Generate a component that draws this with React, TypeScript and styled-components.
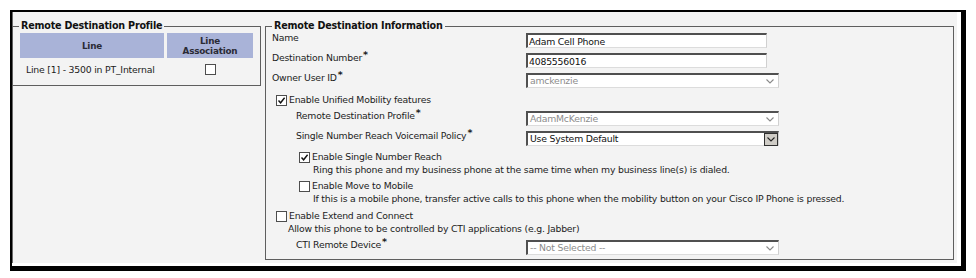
import React from "react";
import styled, { createGlobalStyle } from "styled-components";

const GlobalStyle = createGlobalStyle`
  html, body { margin: 0; padding: 0; background: #ffffff; }
  body {
    font-family: Tahoma, "DejaVu Sans", sans-serif;
    font-size: 9.3px;
    letter-spacing: -0.2px;
    color: #1c1c1c;
  }
  * { box-sizing: border-box; }
`;

const Frame = styled.div`
  margin: 10px 0 0 10px;
  width: 956px;
  border-style: solid;
  border-color: #000;
  border-width: 2px 5px 5px 2px;
`;

const Panel = styled.div`
  background: #f3f3f3;
  border-right: 4px solid #fff;
  border-bottom: 3px solid #fff;
  box-shadow: inset 1px 0 0 #6a6a6a;
  padding: 8px 3px 3px 0;
  display: flex;
  align-items: flex-start;
  gap: 4px;
`;

const GroupBox = styled.fieldset<{ $w: number; $h: number }>`
  margin: 0;
  padding: 0 6px;
  width: ${(p) => p.$w}px;
  height: ${(p) => p.$h}px;
  min-inline-size: 0;
  border: 1px solid #5e5e5e;
`;

const Legend = styled.legend`
  padding: 0 2px;
  margin-left: 0;
  font-weight: bold;
  font-size: 9.6px;
  line-height: 12px;
  color: #111;
`;

const LineGrid = styled.div`
  margin: 1px 0 0 1px;
  display: grid;
  grid-template-columns: 144px 86px;
  column-gap: 3px;
`;

const HeaderCell = styled.div`
  background: #a9b3d8;
  height: 25px;
  display: flex;
  align-items: center;
  justify-content: center;
  text-align: center;
  font-weight: bold;
  font-size: 8.8px;
  line-height: 10px;
  color: #2b2b35;
`;

const DataCell = styled.div<{ $center?: boolean }>`
  height: 22px;
  display: flex;
  align-items: center;
  justify-content: ${(p) => (p.$center ? "center" : "flex-start")};
  padding-left: ${(p) => (p.$center ? 0 : 6)}px;
  padding-top: 1px;
`;

const Box = styled.span`
  width: 11px;
  height: 11px;
  flex: none;
  display: inline-flex;
  align-items: center;
  justify-content: center;
  background: #fff;
  border: 1px solid #4d4d4d;
`;

const Checkbox = ({ checked }: { checked?: boolean }) => (
  <Box>
    {checked && (
      <svg width="9" height="9" viewBox="0 0 9 9">
        <polyline points="1.5,4.5 3.6,6.8 7.6,1.8" fill="none" stroke="#111" strokeWidth="1.4" />
      </svg>
    )}
  </Box>
);

const Content = styled.div`
  display: flex;
  flex-direction: column;
`;

const FormRow = styled.div<{ $mt?: number }>`
  display: grid;
  grid-template-columns: 254px auto;
  height: 20px;
  margin-top: ${(p) => p.$mt ?? 0}px;
  align-items: start;
`;

const Label = styled.div<{ $indent?: number }>`
  padding-left: ${(p) => p.$indent ?? 0}px;
  line-height: 12px;
  white-space: nowrap;
`;

const Star = styled.span`
  font-weight: bold;
  font-size: 9.5px;
  position: relative;
  top: -3px;
  margin-left: 1px;
`;

const TextBox = styled.input`
  margin-top: 1px;
  width: 241px;
  height: 15px;
  padding: 0 1px;
  font: inherit;
  letter-spacing: inherit;
  color: #111;
  background: #fff;
  border-style: solid;
  border-width: 2px 1px 1px 2px;
  border-color: #505050 #d0d0d0 #dcdcdc #505050;
  outline: none;
`;

const SelectBox = styled.div<{ $disabled?: boolean }>`
  margin-top: 1px;
  width: 253px;
  height: 15px;
  display: flex;
  align-items: center;
  padding-left: 2px;
  background: #fff;
  color: ${(p) => (p.$disabled ? "#8c8c8c" : "#111")};
  border-style: solid;
  border-width: 2px 1px 1px 2px;
  border-color: #505050 #d0d0d0 #dcdcdc #505050;
`;

const SelectText = styled.span`
  flex: 1;
  line-height: 12px;
  white-space: nowrap;
`;

const ArrowButton = styled.span<{ $active?: boolean }>`
  width: 14px;
  height: ${(p) => (p.$active ? 13 : 12)}px;
  margin-right: ${(p) => (p.$active ? 0 : 1)}px;
  display: flex;
  align-items: center;
  justify-content: center;
  background: ${(p) => (p.$active ? "#cfccc6" : "transparent")};
  border: ${(p) => (p.$active ? "1px solid #303030" : "none")};
`;

const Chevron = ({ color }: { color: string }) => (
  <svg width="8" height="5" viewBox="0 0 8 5">
    <polyline points="0.5,0.5 4,4 7.5,0.5" fill="none" stroke={color} strokeWidth="1.1" />
  </svg>
);

const Select = ({ value, disabled }: { value: string; disabled?: boolean }) => (
  <SelectBox $disabled={disabled}>
    <SelectText>{value}</SelectText>
    <ArrowButton $active={!disabled}>
      <Chevron color={disabled ? "#8a8a8a" : "#222"} />
    </ArrowButton>
  </SelectBox>
);

const CheckRow = styled.div<{ $indent: number; $mt: number }>`
  display: flex;
  align-items: center;
  gap: 2px;
  height: 12px;
  margin-top: ${(p) => p.$mt}px;
  padding-left: ${(p) => p.$indent}px;
  line-height: 12px;
  white-space: nowrap;
`;

const Desc = styled.div<{ $indent: number }>`
  padding-left: ${(p) => p.$indent}px;
  line-height: 12px;
  margin-top: 1px;
  white-space: nowrap;
`;

export default function App() {
  return (
    <>
      <GlobalStyle />
      <Frame>
        <Panel>
          <GroupBox $w={249} $h={66}>
            <Legend>Remote Destination Profile</Legend>
            <LineGrid>
              <HeaderCell>Line</HeaderCell>
              <HeaderCell>
                Line
                <br />
                Association
              </HeaderCell>
              <DataCell>Line [1] - 3500 in PT_Internal</DataCell>
              <DataCell $center>
                <Checkbox />
              </DataCell>
            </LineGrid>
          </GroupBox>

          <GroupBox $w={689} $h={240}>
            <Legend>Remote Destination Information</Legend>
            <Content>
              <FormRow>
                <Label>Name</Label>
                <TextBox readOnly defaultValue="Adam Cell Phone" />
              </FormRow>
              <FormRow>
                <Label>
                  Destination Number<Star>*</Star>
                </Label>
                <TextBox readOnly defaultValue="4085556016" />
              </FormRow>
              <FormRow>
                <Label>
                  Owner User ID<Star>*</Star>
                </Label>
                <Select value="amckenzie" disabled />
              </FormRow>

              <CheckRow $indent={4} $mt={2}>
                <Checkbox checked />
                Enable Unified Mobility features
              </CheckRow>
              <FormRow $mt={4}>
                <Label $indent={24}>
                  Remote Destination Profile<Star>*</Star>
                </Label>
                <Select value="AdamMcKenzie" disabled />
              </FormRow>
              <FormRow>
                <Label $indent={24}>
                  Single Number Reach Voicemail Policy<Star>*</Star>
                </Label>
                <Select value="Use System Default" />
              </FormRow>

              <CheckRow $indent={27} $mt={1}>
                <Checkbox checked />
                Enable Single Number Reach
              </CheckRow>
              <Desc $indent={41}>
                Ring this phone and my business phone at the same time when my business line(s) is dialed.
              </Desc>
              <CheckRow $indent={27} $mt={4}>
                <Checkbox />
                Enable Move to Mobile
              </CheckRow>
              <Desc $indent={41}>
                If this is a mobile phone, transfer active calls to this phone when the mobility button on your Cisco IP Phone is pressed.
              </Desc>

              <CheckRow $indent={4} $mt={5}>
                <Checkbox />
                Enable Extend and Connect
              </CheckRow>
              <Desc $indent={16}>Allow this phone to be controlled by CTI applications (e.g. Jabber)</Desc>
              <FormRow $mt={4}>
                <Label $indent={24}>
                  CTI Remote Device<Star>*</Star>
                </Label>
                <Select value="-- Not Selected --" disabled />
              </FormRow>
            </Content>
          </GroupBox>
        </Panel>
      </Frame>
    </>
  );
}
